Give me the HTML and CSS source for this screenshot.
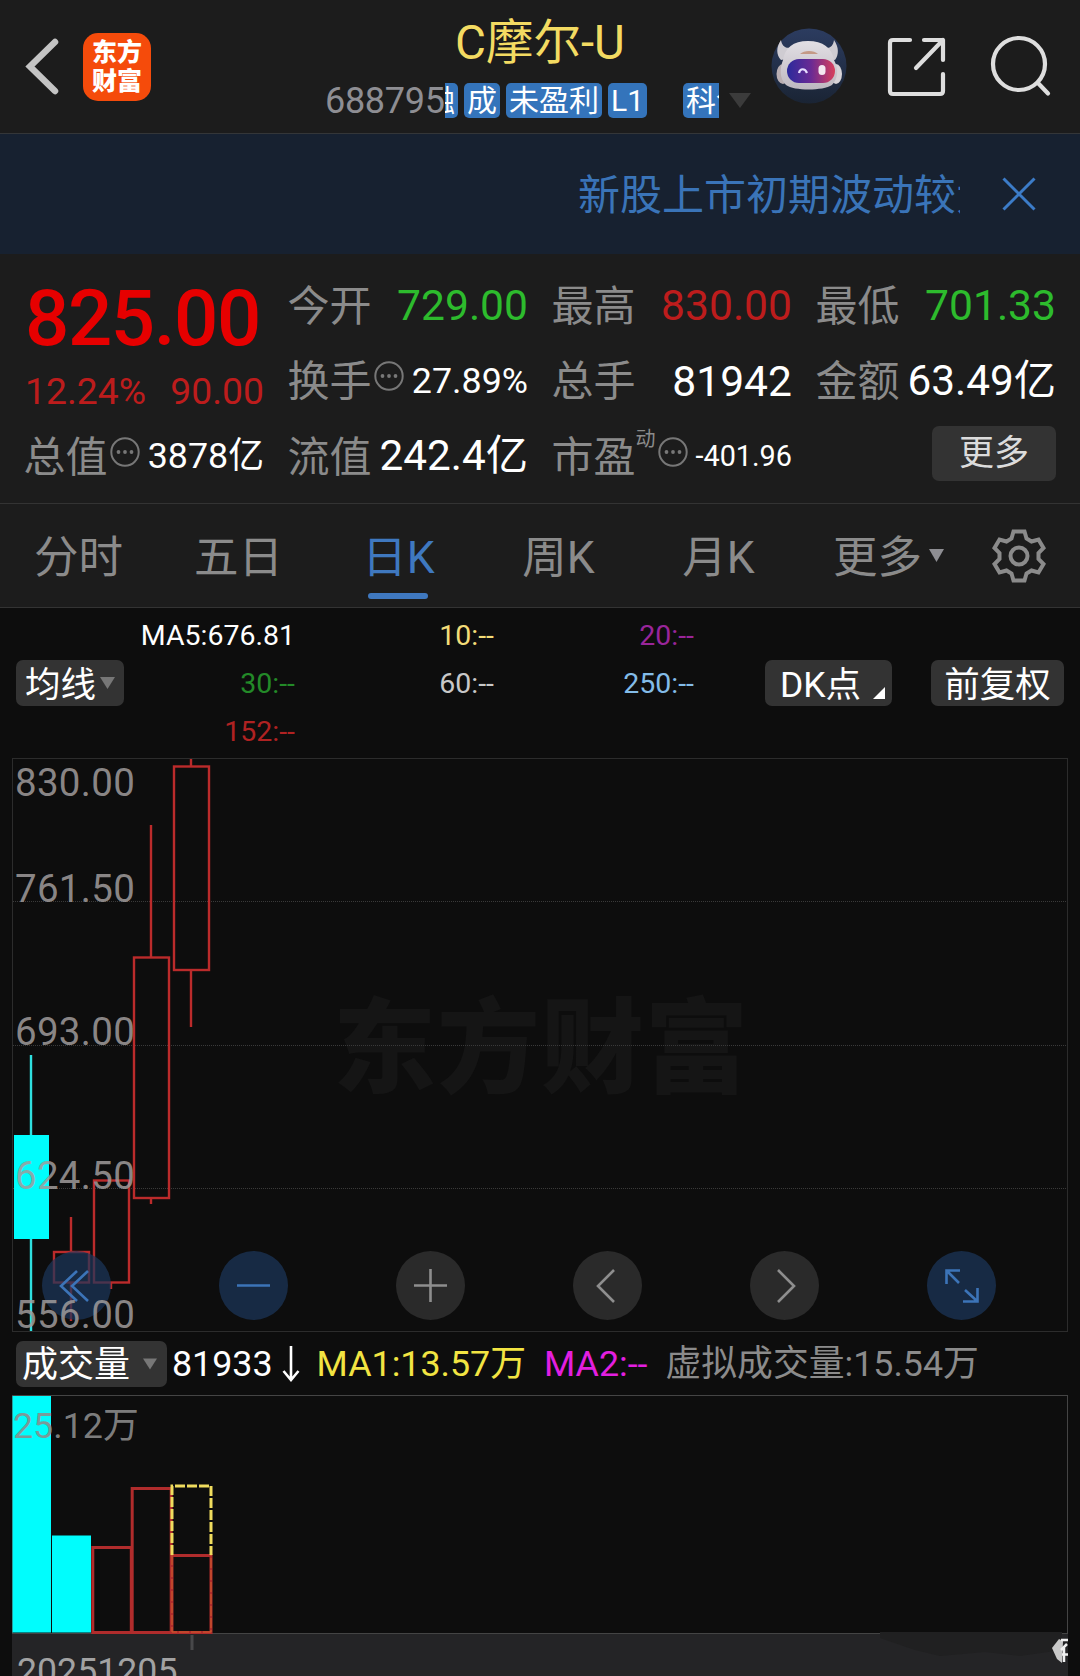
FILE: index.html
```html
<!DOCTYPE html>
<html lang="zh-CN">

<head>
    <meta charset="UTF-8">
    <meta name="viewport" content="width=device-width, initial-scale=1.0">
    <title>C摩尔-U 688795</title>
    <link rel="stylesheet" href="styles.css">
</head>

<body>
    <header class="header">
        <svg class="back" width="34" height="58" viewBox="0 0 34 58">
            <path d="M30 5 L5 29.5 L30 54" />
        </svg>
        <div class="logo"><span>东方</span><span>财富</span></div>
        <div class="stock">
            <h1>C摩尔-U</h1>
            <div class="stock-info">
                <span class="code">688795</span>
                <div class="tags">
                    <span class="tag tag-first">融</span>
                    <span class="tag">成</span>
                    <span class="tag">未盈利</span>
                    <span class="tag">L1</span>
                    <span class="tag tag-next">科创</span>
                </div>
                <svg class="drop" width="22" height="15" viewBox="0 0 22 15"><path d="M0 0H22L11 15Z" /></svg>
            </div>
        </div>
        <svg class="avatar" width="76" height="76" viewBox="0 0 76 76">
            <defs>
                <linearGradient id="visor" x1="0" x2="1">
                    <stop offset="0" stop-color="#2b2a9c" />
                    <stop offset=".5" stop-color="#6a2a94" />
                    <stop offset="1" stop-color="#d8405c" />
                </linearGradient>
                <linearGradient id="disc" x1="0" y1="0" x2="0" y2="1">
                    <stop offset="0" stop-color="#2c3c60" />
                    <stop offset="1" stop-color="#1a2434" />
                </linearGradient>
                <linearGradient id="face" x1="0" y1="0" x2="0" y2="1">
                    <stop offset="0" stop-color="#e2dfe4" />
                    <stop offset="1" stop-color="#bdb8c0" />
                </linearGradient>
            </defs>
            <circle cx="38" cy="38" r="37.5" fill="url(#disc)" />
            <path d="M10 12C5 19 5 27 10 32L20 30L23 18C16 22 11 19 10 12ZM63 12C68 19 68 27 64 32L54 30L51 18C58 22 62 19 63 12Z" fill="#cfccd2" />
            <ellipse cx="12" cy="46" rx="6.5" ry="10" fill="#b9aeb2" />
            <ellipse cx="65" cy="46" rx="6" ry="10" fill="#d8d4d8" />
            <path d="M12 32C14 20 22 13 37 13S61 20 63 32C68 41 67 51 61 57C52 63 23 63 15 57C8 50 9 40 12 32Z" fill="url(#face)" />
            <path d="M29 26C33 22 43 22 47 26Z" fill="#c49a87" />
            <rect x="16" y="31" width="48" height="24" rx="12" fill="url(#visor)" />
            <path d="M28 45C29 40 34 40 36 45" fill="none" stroke="#e6dcff" stroke-width="2.2" />
            <rect x="47.5" y="37" width="7" height="10" rx="3.5" fill="#f4e8f0" />
        </svg>
        <svg class="share" width="60" height="60" viewBox="0 0 60 60">
            <path d="M23 3H6Q3 3 3 6V54Q3 57 6 57H53Q56 57 56 54V37M37 3H56V23M56 3L29 31" />
        </svg>
        <svg class="search" width="62" height="62" viewBox="0 0 62 62">
            <circle cx="29" cy="29" r="26" />
            <path d="M48 48L58 58.5" />
        </svg>
    </header>

    <div class="notice">
        <div class="notice-text">新股上市初期波动较大</div>
        <svg class="close" width="34" height="34" viewBox="0 0 34 34"><path d="M1.5 1.5L32.5 32.5M32.5 1.5L1.5 32.5" /></svg>
    </div>

    <section class="quote">
        <div class="price">
            <div class="last">825.00</div>
            <div class="change"><span>12.24%</span><span>90.00</span></div>
        </div>
        <div class="cell"><label>今开</label><b class="green">729.00</b></div>
        <div class="cell"><label>最高</label><b class="red">830.00</b></div>
        <div class="cell"><label>最低</label><b class="green">701.33</b></div>
        <div class="cell">
            <label>换手</label>
            <svg class="dots" width="30" height="30" viewBox="0 0 30 30"><circle class="ring" cx="15" cy="15" r="13.7" /><circle cx="8.5" cy="15" r="1.9" /><circle cx="15" cy="15" r="1.9" /><circle cx="21.5" cy="15" r="1.9" /></svg>
            <b class="mid">27.89%</b>
        </div>
        <div class="cell"><label>总手</label><b>81942</b></div>
        <div class="cell"><label>金额</label><b class="wide">63.49亿</b></div>
        <div class="cell">
            <label>总值</label>
            <svg class="dots" width="30" height="30" viewBox="0 0 30 30"><circle class="ring" cx="15" cy="15" r="13.7" /><circle cx="8.5" cy="15" r="1.9" /><circle cx="15" cy="15" r="1.9" /><circle cx="21.5" cy="15" r="1.9" /></svg>
            <b class="mid">3878亿</b>
        </div>
        <div class="cell"><label>流值</label><b class="wide">242.4亿</b></div>
        <div class="cell">
            <label>市盈</label><sup>动</sup>
            <svg class="dots" width="30" height="30" viewBox="0 0 30 30"><circle class="ring" cx="15" cy="15" r="13.7" /><circle cx="8.5" cy="15" r="1.9" /><circle cx="15" cy="15" r="1.9" /><circle cx="21.5" cy="15" r="1.9" /></svg>
            <b class="small">-401.96</b>
        </div>
        <div class="cell"><button class="more">更多</button></div>
    </section>

    <nav class="tabs">
        <a>分时</a>
        <a>五日</a>
        <a class="active">日K</a>
        <a>周K</a>
        <a>月K</a>
        <a class="tab-more">更多<svg width="15" height="13" viewBox="0 0 15 13"><path d="M0 0H15L7.5 13Z" /></svg></a>
        <svg class="gear" width="54" height="54" viewBox="0 0 54 54">
            <path d="M21.5 2.5H32.5L34.5 9.5L39.5 12.5L46.5 10.5L51.5 19L46.5 24V30L51.5 35L46.5 43.5L39.5 41.5L34.5 44.5L32.5 51.5H21.5L19.5 44.5L14.5 41.5L7.5 43.5L2.5 35L7.5 30V24L2.5 19L7.5 10.5L14.5 12.5L19.5 9.5Z" />
            <circle cx="27" cy="27" r="8.5" />
        </svg>
    </nav>

    <section class="ma">
        <button class="chip chip-ma"><span>均线</span><svg width="15" height="12" viewBox="0 0 15 12"><path d="M0 0H15L7.5 12Z" /></svg></button>
        <div class="ma-list">
            <span class="c-white">MA5:676.81</span>
            <span class="c-yellow">10:--</span>
            <span class="c-purple">20:--</span>
            <span class="c-green">30:--</span>
            <span class="c-grey">60:--</span>
            <span class="c-blue">250:--</span>
            <span class="c-red">152:--</span>
        </div>
        <button class="chip chip-dk"><span>DK点</span><svg width="12" height="12" viewBox="0 0 12 12"><path d="M12 0V12H0Z" /></svg></button>
        <button class="chip chip-fq"><span>前复权</span></button>
    </section>

    <section class="kline">
        <svg class="candles" width="1080" height="576" viewBox="0 756 1080 576">
            <text class="watermark" x="333" y="1085">东方财富</text>
            <rect class="frame" x="12.5" y="758.5" width="1055" height="573" />
            <path class="grid" d="M13 901.5H1067M13 1045.5H1067M13 1188.5H1067" />
            <g class="down">
                <path d="M31 1055V1331" />
                <rect x="14" y="1135" width="35" height="104" />
            </g>
            <g class="up">
                <path d="M71 1217V1252M71 1282V1321" />
                <rect x="54" y="1252" width="35" height="30.5" />
                <path d="M111 1282V1289" />
                <rect x="94" y="1180.5" width="35" height="102" />
                <path d="M151 825V957M151 1198V1204" />
                <rect x="134" y="957.5" width="35" height="240.5" />
                <path d="M191 759V766M191 970V1027" />
                <rect x="174" y="766.5" width="35" height="203.5" />
            </g>
        </svg>
        <div class="tools">
            <span class="tool blue"><svg viewBox="0 0 69 69"><path d="M35 20L19 35L35 50M46 20L30 35L46 50" /></svg></span>
            <span class="tool blue"><svg viewBox="0 0 69 69"><path d="M18 34.5H51" /></svg></span>
            <span class="tool"><svg viewBox="0 0 69 69"><path d="M18 34.5H51M34.5 18V51" /></svg></span>
            <span class="tool"><svg viewBox="0 0 69 69"><path d="M41 19L25 35L41 51" /></svg></span>
            <span class="tool"><svg viewBox="0 0 69 69"><path d="M28 19L44 35L28 51" /></svg></span>
            <span class="tool blue"><svg viewBox="0 0 69 69"><path d="M33 19.5H19.5V33M20 20L32 32M50.5 37V50.5H36M50 50L38 39" /></svg></span>
        </div>
        <svg class="axis" width="140" height="576" viewBox="0 756 140 576">
            <text x="15" y="796">830.00</text>
            <text x="15" y="902">761.50</text>
            <text x="15" y="1045">693.00</text>
            <text x="15" y="1188.5">624.50</text>
            <text x="15" y="1328">556.00</text>
        </svg>
    </section>

    <section class="vol-info">
        <button class="chip chip-vol"><span>成交量</span><svg width="14" height="12" viewBox="0 0 15 12"><path d="M0 0H15L7.5 12Z" /></svg></button>
        <span class="c-white vol-now">81933</span>
        <svg class="arrow" width="18" height="36" viewBox="0 0 18 36"><path d="M9 0V34M1.5 25L9 34L16.5 25" /></svg>
        <span class="c-lemon vol-ma1">MA1:13.57万</span>
        <span class="c-pink vol-ma2">MA2:--</span>
        <span class="c-dim">虚拟成交量:15.54万</span>
    </section>

    <section class="volume">
        <svg width="1080" height="281" viewBox="0 1395 1080 281">
            <rect class="frame vframe" x="12.5" y="1395.5" width="1055" height="238" />
            <rect class="strip" x="12" y="1634" width="1056" height="42" />
            <rect class="vdown" x="12.5" y="1396" width="38.5" height="236.5" />
            <rect class="vdown" x="52" y="1535.5" width="39" height="97" />
            <g class="vup">
                <rect x="92.8" y="1547.5" width="38.5" height="85" />
                <rect x="132.2" y="1488.5" width="39" height="144" />
                <rect x="172" y="1555.5" width="39" height="77" />
            </g>
            <path class="predict" d="M172 1555V1486H211V1555" />
            <path class="predict faint" d="M172 1555V1632H211V1555" />
            <text class="vmax" x="13" y="1438">25.12万</text>
            <path class="tick" d="M192 1635V1650" />
            <text class="date" x="17" y="1683">20251205</text>
            <path class="smudge" d="M880 1632H1062V1650L1020 1656L985 1652L940 1656L915 1650L880 1638Z" />
            <path class="mark" d="M1052 1648L1059 1639L1063 1641L1062 1663L1057 1659Z" />
            <path class="mark-line" d="M1061 1640H1068M1061 1650L1067 1644M1064 1648V1662M1062 1654.5H1068" />
        </svg>
    </section>
</body>

</html>
```
FILE: styles.css
```css
* {
    box-sizing: border-box;
}

body {
    margin: 0;
    width: 1080px;
    height: 1676px;
    overflow: hidden;
    background: #0d0d0d;
    color: #fff;
    font-family: Roboto, "Noto Sans CJK SC", sans-serif;
    font-weight: 400;
}

svg {
    display: block;
    flex: none;
}

button {
    font-family: inherit;
    border: none;
    padding: 0;
    color: #fff;
}

/* header */
.header {
    display: flex;
    height: 134px;
    background: #1c1c1c;
    border-bottom: 1px solid #343638;
}

.back {
    margin: 37px 0 0 25px;
    fill: none;
    stroke: #c4c4c4;
    stroke-width: 6.5;
    stroke-linecap: round;
}

.logo {
    display: flex;
    flex-direction: column;
    align-items: center;
    width: 68px;
    height: 68px;
    margin: 33px 0 0 24px;
    padding-top: 3px;
    border-radius: 15px;
    background: #f54b0b;
    font-family: "Noto Sans CJK SC", sans-serif;
    font-size: 25px;
    font-weight: 900;
    line-height: 29px;
}

.stock {
    width: 430px;
    margin-left: 174px;
}

h1 {
    margin: 13px 0 0 130px;
    font-size: 47.5px;
    font-weight: 400;
    line-height: 61px;
    color: #f3db62;
    white-space: nowrap;
}

.stock-info {
    display: flex;
    margin-top: 9px;
    height: 36px;
}

.code {
    width: 120px;
    font-size: 36px;
    line-height: 37px;
    letter-spacing: -0.3px;
    color: #8e8e93;
}

.tags {
    display: flex;
    justify-content: flex-start;
    gap: 6px;
    width: 274px;
    overflow: hidden;
}

.tag {
    flex: none;
    height: 35px;
    padding: 0 3px;
    border-radius: 5px;
    background: #3474bb;
    font-size: 30px;
    line-height: 36px;
}

.tag-first {
    margin-left: -23px;
}

.tag-next {
    margin-left: 30px;
}

.drop {
    margin: 10px 0 0 10px;
    fill: #3b3b3b;
}

.avatar {
    margin: 28px 0 0 16px;
}

.share {
    margin: 37px 0 0 40px;
    fill: none;
    stroke: #dedede;
    stroke-width: 4.2;
    stroke-linecap: round;
    stroke-linejoin: round;
}

.search {
    margin: 35px 0 0 43px;
    fill: none;
    stroke: #dedede;
    stroke-width: 4.2;
    stroke-linecap: round;
}

/* notice bar */
.notice {
    display: flex;
    align-items: center;
    height: 120px;
    background: #172130;
}

.notice-text {
    width: 382px;
    margin-left: 578px;
    padding-top: 4px;
    overflow: hidden;
    white-space: nowrap;
    font-size: 42px;
    line-height: 60px;
    color: #3a74b8;
}

.close {
    margin-left: 42px;
    fill: none;
    stroke: #3c7cc8;
    stroke-width: 3;
}

/* quote grid */
.quote {
    display: grid;
    grid-template-columns: repeat(4, 239px);
    grid-template-rows: repeat(3, 75.5px);
    column-gap: 25px;
    height: 250px;
    padding: 13px 25px 0;
    background: #1c1c1c;
    border-bottom: 1px solid #333;
}

.price {
    grid-row: span 2;
}

.last {
    margin-top: 4px;
    font-size: 78px;
    font-weight: 500;
    line-height: 96px;
    letter-spacing: -1.4px;
    color: #e60000;
}

.change {
    display: flex;
    justify-content: space-between;
    font-size: 37.3px;
    line-height: 49px;
    color: #bd1c1c;
}

.cell {
    display: flex;
    align-items: center;
    white-space: nowrap;
    line-height: 60px;
}

.cell label {
    margin: 4px 0 0 -1.5px;
    font-size: 42px;
    color: #8b8b8b;
}

.cell b {
    margin-left: auto;
    padding-top: 1px;
    font-size: 42.6px;
    font-weight: 400;
}

.cell .mid {
    font-size: 35.8px;
}

.cell .wide {
    font-size: 42.3px;
}

.cell .small {
    font-size: 28.8px;
}

.cell .green {
    color: #2dbb2d;
}

.cell .red {
    color: #bd1c1c;
}

.cell sup {
    align-self: flex-start;
    font-size: 20px;
    line-height: 20px;
    margin-top: 11px;
    color: #8b8b8b;
}

.dots {
    margin: -8px 0 0 2px;
    fill: #777;
}

.dots .ring {
    fill: none;
    stroke: #777;
    stroke-width: 2;
}

.more {
    width: 124px;
    height: 55px;
    margin: -5px 0 0 auto;
    border-radius: 7px;
    background: #333;
    color: #dcdcdc;
    font-size: 35px;
    line-height: 55px;
}

/* period tabs */
.tabs {
    display: flex;
    height: 104px;
    background: #1c1c1c;
    border-bottom: 1px solid #333;
}

.tabs a {
    position: relative;
    flex: none;
    width: 160px;
    padding-right: 3px;
    text-align: center;
    font-size: 44.5px;
    line-height: 109px;
    color: #8b8b8b;
}

.tabs .active {
    color: #3f78bf;
}

.active::after {
    content: "";
    position: absolute;
    left: 48px;
    bottom: 8px;
    width: 60px;
    height: 6px;
    border-radius: 3px;
    background: #3f78bf;
}

.tabs .tab-more {
    display: flex;
    width: 150px;
    padding-left: 33px;
}

.tab-more svg {
    margin: 45px 0 0 7px;
    fill: #8e8e93;
}

.gear {
    margin: 25px 0 0 42px;
    fill: none;
    stroke: #8b8b8b;
    stroke-width: 4;
}

/* moving averages */
.ma {
    display: flex;
    align-items: center;
    height: 148px;
    padding-top: 2px;
}

.chip {
    display: flex;
    align-items: center;
    flex: none;
    height: 46px;
    border-radius: 7px;
    background: #333;
    font-size: 35.5px;
    line-height: 46px;
}

.chip span {
    padding-top: 3px;
}

.chip svg {
    fill: #777;
}

.chip-ma {
    width: 108px;
    margin-left: 16px;
    padding-left: 9px;
}

.chip-ma svg {
    margin-left: 4px;
}

.ma-list {
    display: grid;
    grid-template-columns: 171px 199px 200px;
    grid-template-rows: repeat(3, 48px);
    text-align: right;
    font-size: 28.5px;
    line-height: 49px;
}

.chip-dk {
    width: 127px;
    margin-left: 71px;
    padding-left: 15px;
}

.chip-dk svg {
    align-self: flex-end;
    margin: 0 0 7px 12px;
    fill: #fff;
}

.chip-fq {
    width: 133px;
    margin-left: 39px;
    justify-content: center;
}

.c-white { color: #fff; }
.c-yellow { color: #f3dc78; }
.c-purple { color: #99259a; }
.c-green { color: #238a28; }
.c-grey { color: #c8c8c8; }
.c-blue { color: #83bce8; }
.c-red { color: #b02222; }
.c-lemon { color: #f2e442; }
.c-pink { color: #e31fe0; }
.c-dim { color: #8b8b8b; }

/* candlestick chart */
.kline {
    position: relative;
    height: 576px;
}

.frame {
    fill: none;
    stroke: #2c2c2c;
}

.vframe {
    stroke: #444;
}

.grid {
    stroke: #3a3a3a;
    stroke-dasharray: 1 1;
}

.watermark {
    font-family: "Noto Sans CJK SC", sans-serif;
    font-size: 103px;
    font-weight: 900;
    letter-spacing: 1px;
    fill: #151515;
}

.down path {
    stroke: #2fe0e0;
    stroke-width: 2.4;
}

.down rect,
.vdown {
    fill: #00fdfd;
}

.up {
    fill: none;
    stroke: #bb2b2b;
    stroke-width: 2.4;
}

.tools {
    position: absolute;
    left: 42px;
    top: 495px;
    display: flex;
    gap: 108px;
}

.tool {
    width: 69px;
    height: 69px;
    border-radius: 50%;
    background: #2a2a2a;
}

.tool svg {
    fill: none;
    stroke: #8e8e8e;
    stroke-width: 2.6;
}

.tool.blue {
    background: rgba(28, 56, 92, 0.7);
}

.tool.blue svg {
    stroke: #3c74b8;
}

.axis {
    position: absolute;
    left: 0;
    top: 0;
    font-size: 38.5px;
    letter-spacing: 0.3px;
    fill: rgba(160, 156, 156, 0.85);
}

/* volume */
.vol-info {
    display: flex;
    align-items: center;
    height: 63px;
    font-size: 35.8px;
    line-height: 46px;
    white-space: nowrap;
}

.chip-vol {
    width: 151px;
    margin-left: 16px;
    padding-left: 6px;
    font-size: 36px;
}

.chip-vol svg {
    margin-left: 13px;
}

.vol-now {
    margin-left: 5px;
}

.arrow {
    margin-left: 9px;
    fill: none;
    stroke: #fff;
    stroke-width: 2.6;
}

.vol-ma1 {
    margin-left: 17px;
}

.vol-ma2 {
    margin: 0 18px 0 18px;
}

.strip {
    fill: #242426;
}

.vup {
    fill: none;
    stroke: #b02c2c;
    stroke-width: 3;
}

.predict {
    fill: none;
    stroke: #efdc5e;
    stroke-width: 3;
    stroke-dasharray: 10 2;
}

.faint {
    stroke: #d0602c;
    stroke-width: 1;
}

.vmax {
    font-size: 35.8px;
    fill: rgba(140, 140, 140, 0.9);
}

.date {
    font-size: 35.7px;
    fill: #a2a2a2;
}

.tick {
    stroke: #48484a;
    stroke-width: 3;
}

.smudge {
    fill: #202021;
}

.mark {
    fill: #c8c8c8;
}

.mark-line {
    fill: none;
    stroke: #f0f0f0;
    stroke-width: 2.5;
}
```
